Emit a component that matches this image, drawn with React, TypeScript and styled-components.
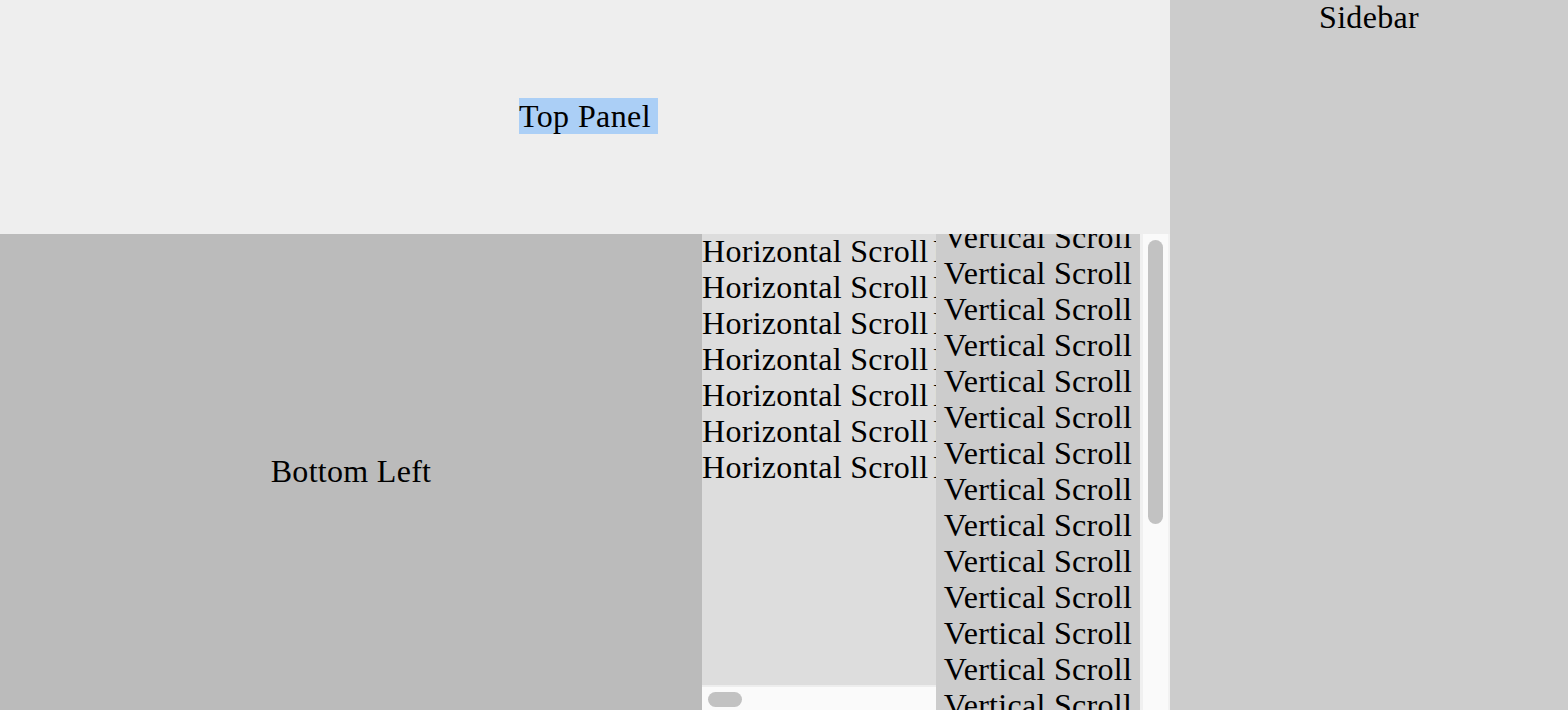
import React from "react";
import styled, { createGlobalStyle } from "styled-components";

const Global = createGlobalStyle`
  html, body { margin: 0; padding: 0; overflow: hidden; }
  body { font-family: "Liberation Serif", "Times New Roman", serif; color: #000; }
`;

const Page = styled.div`
  display: flex;
  width: 1568px;
  height: 710px;
  overflow: hidden;
  font-size: 32px;
  line-height: 36px;
  letter-spacing: 0.3px;
`;

const Main = styled.div`
  display: flex;
  flex-direction: column;
  width: 1170px;
  flex: none;
`;

const TopPanel = styled.div`
  height: 234px;
  flex: none;
  background: #eeeeee;
  display: flex;
  align-items: center;
  justify-content: center;
  padding-bottom: 3px;
  box-sizing: border-box;
`;

const Selected = styled.span`
  background: #abcff6;
  white-space: pre;
  padding-right: 7px;
  margin-right: -7px;
  letter-spacing: 0.4px;
`;

const BottomRow = styled.div`
  flex: 1;
  display: flex;
  min-height: 0;
`;

const BottomLeft = styled.div`
  width: 702px;
  flex: none;
  background: #bbbbbb;
  display: flex;
  align-items: center;
  justify-content: center;
  padding-bottom: 2px;
  box-sizing: border-box;
`;

const HPanel = styled.div`
  width: 234px;
  flex: none;
  display: flex;
  flex-direction: column;
  background: #dddddd;
`;

const HViewport = styled.div`
  flex: 1;
  overflow: hidden;
  padding-top: 0;
  margin-top: -1px;
`;

const HLine = styled.div`
  white-space: nowrap;
`;

const HTail = styled.span`
  margin-left: -4px;
`;

const HTrack = styled.div`
  height: 25px;
  flex: none;
  background: #fafafa;
  border-top: 2px solid #ededed;
  box-sizing: border-box;
  padding: 5px 0 0 6px;
`;

const HThumb = styled.div`
  width: 34px;
  height: 15px;
  border-radius: 8px;
  background: #c2c2c2;
`;

const VPanel = styled.div`
  width: 234px;
  flex: none;
  display: flex;
`;

const VViewport = styled.div`
  flex: 1;
  overflow: hidden;
  background: #cccccc;
`;

const VContent = styled.div<{ $offset: number }>`
  margin-top: ${(p) => -p.$offset}px;
  text-align: center;
`;

const VLine = styled.div`
  white-space: nowrap;
`;

const VTrack = styled.div`
  width: 30px;
  flex: none;
  background: #fafafa;
  box-sizing: border-box;
  border-left: 3px solid #f0f0f0;
  border-right: 2px solid #f2f2f2;
  padding: 6px 0 0 5px;
`;

const VThumb = styled.div`
  width: 15px;
  height: 284px;
  border-radius: 8px;
  background: #c2c2c2;
`;

const Sidebar = styled.div`
  flex: 1;
  background: #cccccc;
  text-align: center;
`;

const SidebarTitle = styled.div`
  position: relative;
  top: -1px;
`;

export default function App() {
  const hLines = Array.from({ length: 7 });
  const vLines = Array.from({ length: 16 });
  return (
    <>
      <Global />
      <Page>
        <Main>
          <TopPanel>
            <Selected>Top Panel</Selected>
          </TopPanel>
          <BottomRow>
            <BottomLeft>Bottom Left</BottomLeft>
            <HPanel>
              <HViewport>
                {hLines.map((_, i) => (
                  <HLine key={i}>
                    Horizontal Scroll <HTail>Item With Very Long Content</HTail>
                  </HLine>
                ))}
              </HViewport>
              <HTrack>
                <HThumb />
              </HTrack>
            </HPanel>
            <VPanel>
              <VViewport>
                <VContent $offset={15}>
                  {vLines.map((_, i) => (
                    <VLine key={i}>Vertical Scroll</VLine>
                  ))}
                </VContent>
              </VViewport>
              <VTrack>
                <VThumb />
              </VTrack>
            </VPanel>
          </BottomRow>
        </Main>
        <Sidebar>
          <SidebarTitle>Sidebar</SidebarTitle>
        </Sidebar>
      </Page>
    </>
  );
}
